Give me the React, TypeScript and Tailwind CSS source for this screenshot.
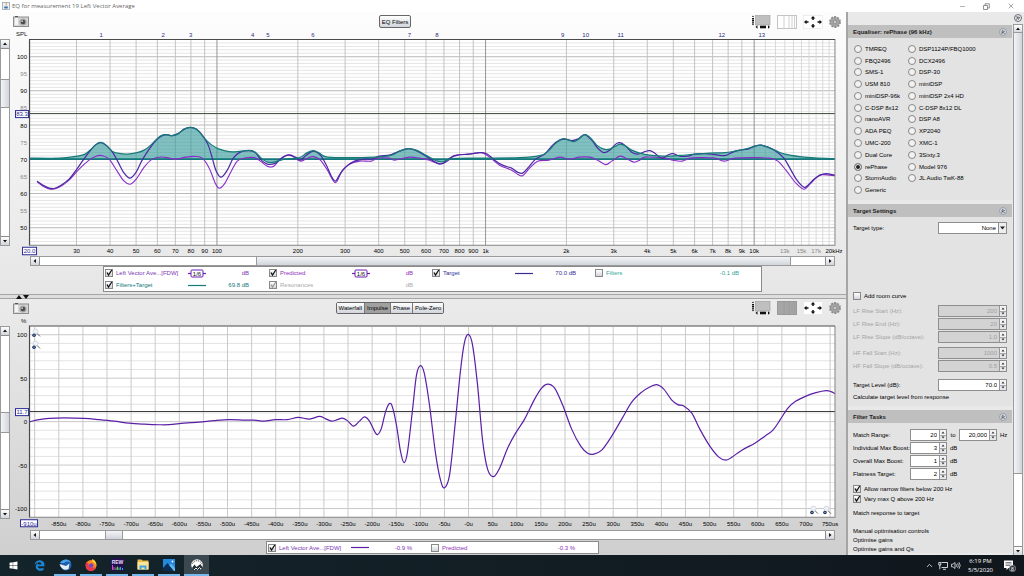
import React from "react";
import { FaWindows, FaEdgeLegacy } from "react-icons/fa";
import { Minus, X, ChevronUp, ChevronsUp, ChevronsRight } from "lucide-react";

type Point = [number, number];

const filtersTarget: Point[] = [
  [30, 158], [60, 158], [78, 156], [86, 154], [92, 149], [98, 143.5], [102, 142.3], [107, 145], [113, 151],
  [120, 153.3], [128, 154], [138, 152.5], [145, 150], [151, 145.5], [157, 139.5], [162, 135.5], [167, 134.5],
  [173, 135.5], [179, 133.5], [185, 129], [191, 127.3], [197, 129], [202, 134], [206, 139], [212, 144.5],
  [220, 149], [230, 151.5], [240, 151.3], [250, 150.3], [256, 152], [262, 158], [268, 162], [275, 162],
  [285, 159], [300, 157.5], [307, 153], [314, 150.5], [320, 153], [326, 156.5], [340, 157.5], [375, 157],
  [392, 155], [400, 151], [409, 148.5], [418, 150.5], [428, 156], [438, 161], [444, 161.5], [452, 158.5],
  [480, 158], [520, 157.5], [540, 155.5], [548, 151.5], [555, 144], [560, 140], [564, 138.5], [569, 140],
  [574, 141.5], [579, 139], [585, 134.5], [591, 138], [597, 145], [604, 149], [610, 149], [616, 146],
  [620, 144], [626, 146], [632, 150], [640, 153], [650, 155], [665, 156], [680, 155.3], [695, 154],
  [710, 153], [725, 152.5], [735, 151], [745, 149], [755, 146], [761, 145], [768, 147], [776, 150.5],
  [785, 154], [800, 156.5], [815, 157.8], [835, 158.5],
];

const predicted: Point[] = [
  [38, 181], [44, 185], [50, 188], [55, 188.3], [62, 185], [70, 179], [77, 170], [84, 160], [90, 152],
  [96, 145], [102, 142.5], [108, 146], [114, 153], [119, 162], [125, 173], [131, 178], [137, 172],
  [143, 160], [150, 149], [157, 140], [162, 136], [167, 134.5], [173, 135.5], [179, 133.5], [185, 129],
  [191, 127.3], [197, 129], [203, 135], [209, 145], [213, 158], [217, 171], [222, 177], [228, 170],
  [234, 158], [241, 152], [250, 150.5], [256, 152.5], [262, 160], [268, 164], [276, 163], [282, 158],
  [289, 155], [296, 157], [301, 160], [307, 155], [314, 151], [321, 155], [327, 165], [332, 176],
  [336, 181], [340, 175], [345, 168], [355, 161], [365, 159], [372, 159], [380, 156], [390, 155],
  [400, 151], [409, 148.5], [418, 151], [428, 157], [438, 163], [444, 163], [450, 158], [458, 155],
  [470, 154], [482, 152.5], [488, 154], [495, 160], [503, 165], [512, 168], [518, 172], [523, 173],
  [529, 167], [536, 159], [545, 154], [553, 145], [560, 140], [566, 139], [572, 140.5], [578, 139],
  [585, 134.5], [592, 140], [598, 148], [604, 152.5], [610, 150], [616, 144], [620, 142.5], [625, 145],
  [632, 152], [638, 154], [645, 151.5], [650, 150.5], [655, 153], [662, 158], [668, 155], [673, 153.5],
  [680, 156], [688, 156], [695, 154], [705, 153.5], [715, 154.5], [725, 155.5], [733, 152], [740, 150],
  [748, 149], [755, 146], [761, 145], [768, 147], [776, 151], [784, 158], [790, 168], [797, 180],
  [804, 187], [808, 185], [814, 179], [820, 175], [826, 173.5], [835, 175],
];

const measured: Point[] = [
  [38, 181.5], [44, 186], [52, 189], [60, 187], [70, 180], [80, 169], [90, 160], [97, 156], [103, 155.5],
  [110, 159], [118, 171], [125, 181], [131, 184], [137, 179], [145, 167], [153, 159], [162, 156.8],
  [170, 158], [177, 159], [187, 157], [196, 156.3], [203, 158], [210, 168], [216, 183], [220, 188],
  [225, 184], [232, 171], [238, 161], [245, 158], [255, 157.5], [261, 161], [268, 166], [274, 166.3],
  [280, 160], [286, 155.5], [292, 155], [297, 159], [302, 161], [308, 158], [314, 156.5], [321, 160],
  [328, 170], [336, 182.5], [342, 172], [350, 164], [360, 161], [372, 161], [378, 158], [390, 158],
  [395, 160], [410, 157], [420, 158], [430, 160], [440, 164], [448, 161], [454, 155.5], [468, 154],
  [482, 152.5], [490, 157], [500, 165], [512, 170], [518, 174], [523, 175.5], [530, 168], [538, 161],
  [549, 160], [560, 157], [570, 159], [580, 157], [590, 157], [598, 160], [606, 164.5], [612, 161],
  [620, 156], [626, 158], [634, 162], [640, 160], [645, 157], [665, 158], [673, 160], [682, 161],
  [690, 158], [700, 157.5], [715, 158], [724, 161], [735, 158], [755, 157.5], [770, 158], [778, 161],
  [786, 170], [796, 183], [804, 189], [810, 184], [816, 178], [822, 174.5], [835, 175.5],
];

const impulse: Point[] = [
  [31, 421.5], [40, 419.5], [50, 418.3], [65, 417.8], [85, 418.3], [100, 419.5], [115, 421], [130, 423],
  [145, 424], [160, 424.6], [170, 424.5], [185, 423], [200, 422], [215, 420.5], [230, 419.5], [245, 420],
  [255, 420], [265, 421], [276, 419.5], [288, 419.5], [299, 417.3], [310, 419], [320, 416.3], [326, 418.5],
  [332, 421], [338, 419.5], [343, 418], [348, 420.5], [354, 426], [360, 421], [365, 416.8], [370, 421],
  [375, 431], [378, 434.5], [382, 428], [386, 412], [390, 403.5], [393, 407], [397, 425], [401, 451],
  [404.5, 462.5], [408, 452], [413, 410], [417, 375], [421, 365.5], [425, 374], [430, 405], [436, 453],
  [441, 480], [445, 487.5], [450, 475], [455, 430], [461, 370], [465, 342], [469, 334.5], [473, 345],
  [478, 385], [483, 440], [488, 469], [494, 476.5], [500, 468], [508, 448], [516, 433], [525, 419],
  [535, 399], [542, 388], [548, 384], [555, 388], [563, 405], [572, 429], [581, 446], [588, 453],
  [594, 454], [602, 450], [612, 436], [622, 419], [632, 402], [642, 392], [650, 387], [657, 384.5],
  [664, 389], [672, 400], [678, 404.5], [684, 406], [692, 413], [700, 429], [710, 446], [719, 457],
  [726, 460], [732, 457], [742, 450], [755, 443], [765, 436], [773, 430], [780, 420], [788, 408],
  [796, 401], [806, 396], [816, 392.5], [826, 390.5], [831, 391.5], [835, 393.5],
];

// Catmull-Rom through the points
const smooth = (pts: Point[]) => {
  let d = `M${pts[0][0]} ${pts[0][1]}`;
  for (let i = 0; i < pts.length - 1; i++) {
    const a = pts[i - 1] || pts[i];
    const b = pts[i];
    const c = pts[i + 1];
    const e = pts[i + 2] || c;
    d += `C${b[0] + (c[0] - a[0]) / 6} ${b[1] + (c[1] - a[1]) / 6} ${c[0] - (e[0] - b[0]) / 6} ${c[1] - (e[1] - b[1]) / 6} ${c[0]} ${c[1]}`;
  }
  return d;
};

const freqX = (f: number) => 217.7 + 268.3 * (Math.log10(f) - 2);
const splY = (v: number) => 56.6 + (100 - v) * 3.42;
const timeX = (t: number) => 469 + t * 0.4815;
const pctY = (v: number) => 421.5 - v * 0.868;

const freqLines = [
  30, 40, 50, 60, 70, 80, 90, 100, 200, 300, 400, 500, 600, 700, 800, 900, 1000, 2000, 3000, 4000, 5000,
  6000, 7000, 8000, 9000, 10000, 11000, 12000, 13000, 14000, 15000, 16000, 17000, 18000, 19000,
];

const filterMarks = [
  [1, 102], [2, 164], [3, 191.5], [4, 253.5], [5, 268.5], [6, 313.5], [7, 410], [8, 437.5], [9, 563],
  [10, 586], [11, 621], [12, 722], [13, 762],
];

const leftDevices = [
  "TMREQ", "FBQ2496", "SMS-1", "USM 810", "miniDSP-96k", "C-DSP 8x12", "nanoAVR", "ADA PEQ", "UMC-200",
  "Dual Core", "rePhase", "StormAudio", "Generic",
];
const rightDevices = [
  "DSP1124P/FBQ1000", "DCX2496", "DSP-30", "miniDSP", "miniDSP 2x4 HD", "C-DSP 8x12 DL", "DSP A8",
  "XP2040", "XMC-1", "3Sixty.3", "Model 976", "JL Audio TwK-88",
];

const freqLabel = (f: number) => {
  if (f < 1000) return String(f);
  return `${f / 1000}k`;
};

function SplChart() {
  const labels = freqLines.filter((f) => f <= 10000 || [13000, 15000, 17000].includes(f));
  const minor = Array.from({ length: 60 }, (_, i) => 46 + i).filter((v) => v < 105);
  return (
    <svg viewBox="10 29 836 228" className="block min-w-0 flex-1 text-[6px]" role="img" aria-label="SPL">
      <rect x="30" y="39" width="805" height="206" fill="#fff" />
      {minor.map((v) => (
        <path key={v} d={`M31 ${splY(v)}H835`} stroke={v % 10 === 0 ? "#b9b9b9" : "#dedede"} strokeWidth={v % 10 === 0 ? 1 : 0.8} />
      ))}
      {freqLines.map((f) => (
        <path
          key={f}
          d={`M${freqX(f)} 40V245`}
          stroke={[100, 1000, 10000].includes(f) ? "#8a8a8a" : f > 10000 ? "#d6d6d6" : "#bdbdbd"}
          strokeWidth="0.9"
        />
      ))}
      <path d="M31 113.5H835" stroke="#4c554c" strokeWidth="1" />
      <path d={`${smooth(filtersTarget)}V159H30Z`} fill="#2b9696" fillOpacity="0.6" />
      <g fill="none" strokeLinejoin="round">
        <path d="M30 159H835" stroke="#14787c" strokeWidth="1.6" />
        <path d={smooth(measured)} stroke="#8a2bc8" strokeWidth="1.1" />
        <path d={smooth(predicted)} stroke="#4a28a4" strokeWidth="1.2" />
        <path d={smooth(filtersTarget)} stroke="#157a78" strokeWidth="1.2" />
      </g>
      <path d="M835 39V245H30" fill="none" stroke="#858585" />
      <path d="M30.5 245V39.5H835" fill="none" stroke="#4a4a4a" strokeWidth="1.2" />
      <g fill="#2c2c86" textAnchor="middle">
        {filterMarks.map(([n, x]) => (
          <text key={n} x={x} y="37">{n}</text>
        ))}
      </g>
      <text x="17" y="36" fill="#111">SPL</text>
      <g textAnchor="end">
        {[100, 95, 90, 85, 80, 75, 70, 65, 60, 55, 50].map((v) => (
          <text key={v} x="28" y={splY(v) + 2.5} fill={v % 10 ? "#888" : "#000"}>{v}</text>
        ))}
      </g>
      <g textAnchor="middle">
        {labels.map((f) => (
          <text key={f} x={freqX(f)} y="253" fill={f > 10000 ? "#888" : "#000"}>{freqLabel(f)}</text>
        ))}
        <text x="834" y="253" fill="#000">20kHz</text>
      </g>
      <rect x="16.5" y="110.5" width="13" height="7" fill="#fff" stroke="#2c2c96" />
      <text x="23" y="116" textAnchor="middle" fill="#2c2c96">83.3</text>
      <rect x="23.5" y="247" width="14" height="7.5" fill="#fff" stroke="#2c2c96" />
      <text x="30.5" y="253" textAnchor="middle" fill="#2c2c96">20.0</text>
    </svg>
  );
}

function Magnifier({ x, y }: { x: number; y: number }) {
  return (
    <g transform={`translate(${x} ${y})`}>
      <circle cx="3.5" cy="2.5" r="2.6" fill="#eef1f6" stroke="#c3c8d2" strokeWidth="0.6" />
      <path d="M5.2 4.6L8 7.4" stroke="#555" strokeWidth="0.9" />
      <circle cx="2" cy="6.2" r="1.8" fill="#1d3467" />
      <path d="M1.2 6.2H2.8" stroke="#fff" strokeWidth="0.5" />
    </g>
  );
}

function ImpulseChart() {
  const times = Array.from({ length: 34 }, (_, i) => -900 + i * 50);
  const pcts = Array.from({ length: 21 }, (_, i) => -100 + i * 10);
  return (
    <svg viewBox="10 317 836 212" className="block min-w-0 flex-1 text-[6px]" role="img" aria-label="Impulse">
      <rect x="30" y="326" width="805" height="191" fill="#fff" />
      {pcts.map((v) => (
        <path key={v} d={`M31 ${pctY(v)}H835`} stroke={v % 50 === 0 ? "#bcbcbc" : "#dcdcdc"} strokeWidth="0.8" />
      ))}
      {times.map((t) => (
        <path key={t} d={`M${timeX(t)} 327V517`} stroke="#cacaca" strokeWidth="1" />
      ))}
      <path d="M31 411.5H835" stroke="#3c3c3c" />
      <path d={smooth(impulse)} fill="none" stroke="#5a1fa6" strokeWidth="1.2" />
      <path d="M835 326V517H30" fill="none" stroke="#858585" />
      <path d="M30.5 517V326H835" fill="none" stroke="#4a4a4a" strokeWidth="1.2" />
      <Magnifier x={33} y={329} />
      <Magnifier x={33} y={341} />
      <Magnifier x={810} y={506} />
      <Magnifier x={823} y={506} />
      <text x="22" y="323" fill="#111">%</text>
      <g textAnchor="end" fill="#000">
        {[100, 50, 0, -50, -100].map((v) => (
          <text key={v} x="28" y={pctY(v) + 2.5}>{v}</text>
        ))}
      </g>
      <g textAnchor="middle" fill="#000">
        {times.slice(1).map((t) => (
          <text key={t} x={timeX(t)} y="525.5">{t === 750 ? "750us" : t === 0 ? "-0u" : `${t}u`}</text>
        ))}
      </g>
      <rect x="16.5" y="408.5" width="13" height="7" fill="#fff" stroke="#2c2c96" />
      <text x="23" y="414" textAnchor="middle" fill="#2c2c96">11.7</text>
      <rect x="21.5" y="519.5" width="17" height="7" fill="#fff" stroke="#2c2c96" />
      <text x="30" y="525.3" textAnchor="middle" fill="#2c2c96">-910u</text>
    </svg>
  );
}

const arrows = {
  up: "M2 5L4 2.5L6 5Z",
  down: "M2 3L4 5.5L6 3Z",
  left: "M5 2L2.5 4L5 6Z",
  right: "M3 2L5.5 4L3 6Z",
};

function ScrollButton({ dir }: { dir: "up" | "down" | "left" | "right" }) {
  return (
    <button aria-label={`Scroll ${dir}`} className="size-2 shrink-0 bg-linear-to-b from-white to-gray-300 outline outline-[#8d8d8d]">
      <svg viewBox="0 0 8 8" className="size-full">
        <path d={arrows[dir]} fill="#111" />
      </svg>
    </button>
  );
}

function Camera() {
  return (
    <button aria-label="Capture image" className="h-[11px] w-4 shrink-0">
      <svg viewBox="0 0 16 11" className="size-full">
        <rect x="0.5" y="1" width="15" height="9.5" fill="#d6d6d6" stroke="#8c8c8c" />
        <rect x="2" y="2" width="3" height="7" fill="#f4f4f4" />
        <path d="M2 0.5H5" stroke="#555" />
        <circle cx="10" cy="6" r="3.6" fill="#a8a8a8" />
        <circle cx="10" cy="6" r="2.3" fill="#4a4a4a" />
        <circle cx="9.2" cy="5.2" r="0.9" fill="#ccc" />
      </svg>
    </button>
  );
}

function ToolIcons({ filled }: { filled?: boolean }) {
  return (
    <div className="flex items-center gap-[6px]">
      <button aria-label="Scrollbars">
        <svg viewBox="0 0 20 14" className="h-[14px] w-5">
          <rect x="4.5" y="0.5" width="14.5" height="9.5" fill="#bfbfbf" stroke="#999" strokeWidth="0.6" />
          <path d="M1 2L2 0.5L3 2ZM1 9L2 10.5L3 9Z" fill="#111" />
          <path d="M2 3V8.5" stroke="#111" strokeWidth="2" strokeDasharray="1.4 0.7" />
          <path d="M4.5 12L6.5 10.3V13.7ZM19 12L17 10.3V13.7Z" fill="#111" />
          <path d="M9 12H15" stroke="#111" strokeWidth="2.6" />
        </svg>
      </button>
      <button aria-label="Graph grid">
        <svg viewBox="0 0 20 14" className="h-[14px] w-5">
          <rect x="0.5" y="0.5" width="19" height="13" fill={filled ? "#a6a6a6" : "#fff"} stroke={filled ? "#999" : "#c4c4c4"} />
          <path d="M7 1V13M12 1V13M15 1V13M17.5 1V13" stroke={filled ? "#999" : "#c4c4c4"} strokeWidth="0.8" />
        </svg>
      </button>
      <button aria-label="Graph limits">
        <svg viewBox="0 0 20 14" className="h-[14px] w-5">
          <rect x="0.5" y="0.5" width="19" height="13" fill="#fff" stroke="#ddd" strokeWidth="0.5" />
          <path d="M1 7L3.5 4.7V9.3ZM19 7L16.5 4.7V9.3ZM10 1L12.3 3.5H7.7ZM10 13L12.3 10.5H7.7Z" fill="#111" />
          <path d="M3 7H5.5M17 7H14.5M10 3V5M10 11V9" stroke="#111" strokeWidth="1.5" />
        </svg>
      </button>
      <button aria-label="Graph settings">
        <svg viewBox="0 0 12 12" className="size-3">
          <circle cx="6" cy="6" r="5" fill="none" stroke="#8b8b8b" strokeWidth="1.8" strokeDasharray="2 1.14" />
          <circle cx="6" cy="6" r="4.6" fill="#a3a3a3" stroke="#858585" strokeWidth="0.5" />
          <circle cx="6" cy="6" r="1.7" fill="#ccc" stroke="#808080" strokeWidth="0.6" />
        </svg>
      </button>
    </div>
  );
}

function Check({ checked, disabled }: { checked?: boolean; disabled?: boolean }) {
  return (
    <span className="grid size-2 shrink-0">
      <input
        type="checkbox"
        defaultChecked={checked}
        disabled={disabled}
        className="col-start-1 row-start-1 size-2 appearance-none border border-[#888] bg-linear-to-b from-white to-gray-300"
      />
      {checked && (
        <svg viewBox="0 0 8 8" className="pointer-events-none col-start-1 row-start-1 size-2">
          <path d="M2 3.5L3.5 6L6.8 1" fill="none" stroke={disabled ? "#999" : "#111"} strokeWidth="1.3" />
        </svg>
      )}
    </span>
  );
}

function Trace({ color, smoothing }: { color: string; smoothing?: boolean }) {
  return (
    <svg viewBox="0 0 20 9" className="h-[9px] w-5 shrink-0">
      <path d="M1 4.5H19" stroke={color} strokeWidth="1.2" />
      {smoothing && (
        <>
          <rect x="4" y="1" width="12" height="7" rx="1" fill="#fff" stroke={color} />
          <text x="10" y="6.5" textAnchor="middle" className="text-[6px]" fill="#111">1/6</text>
        </>
      )}
    </svg>
  );
}

interface LegendItemProps {
  label: string;
  value: string;
  color: string;
  text: string;
  checked?: boolean;
  disabled?: boolean;
  line?: boolean;
  smoothing?: boolean;
}

function LegendItem({ label, value, color, text, checked, disabled, line, smoothing }: LegendItemProps) {
  return (
    <div className={`flex h-3 items-center ${text}`}>
      <label className="flex w-[82px] items-center gap-[3px] whitespace-nowrap">
        <Check checked={checked} disabled={disabled} />
        {label}
      </label>
      {line ? <Trace color={color} smoothing={smoothing} /> : <span className="w-5" />}
      <span className="w-[42px] text-right">{value}</span>
    </div>
  );
}

function SpinButtons({ disabled }: { disabled?: boolean }) {
  return (
    <span className="flex w-[7px] flex-col border-l border-[#999]">
      <button disabled={disabled} aria-label="Increase" className="flex flex-1 items-center justify-center border-b border-[#aaa] bg-gray-100">
        <svg viewBox="0 0 4 3" className="h-[3px] w-1"><path d="M0.5 2.5L2 0.5L3.5 2.5Z" fill="#333" /></svg>
      </button>
      <button disabled={disabled} aria-label="Decrease" className="flex flex-1 items-center justify-center bg-gray-200">
        <svg viewBox="0 0 4 3" className="h-[3px] w-1"><path d="M0.5 0.5L2 2.5L3.5 0.5Z" fill="#333" /></svg>
      </button>
    </span>
  );
}

function Spinner({ id, value, width, disabled }: { id: string; value: string; width: string; disabled?: boolean }) {
  return (
    <span className={`flex h-3 border border-[#8e8e8e] ${width} ${disabled ? "bg-[#d3d3d3] text-[#a0a0a0]" : "bg-white text-black"}`}>
      <input id={id} defaultValue={value} disabled={disabled} className="min-w-0 flex-1 pr-[2px] text-right" />
      <SpinButtons disabled={disabled} />
    </span>
  );
}

function PanelHeader({ title }: { title: string }) {
  return (
    <div className="flex h-[13px] items-center justify-between bg-[#bfbfbf] px-[5px] font-bold text-[#1c1c1c]">
      <h2>{title}</h2>
      <button aria-label={`Collapse ${title}`} className="flex size-2 items-center justify-center rounded-full border border-gray-400 bg-gray-300">
        <ChevronsUp size={6} strokeWidth={3} />
      </button>
    </div>
  );
}

function DeviceColumn({ names }: { names: string[] }) {
  return (
    <div className="grid h-[153px] grid-rows-13">
      {names.map((name) => (
        <label key={name} className="flex items-center gap-[3px] whitespace-nowrap">
          <input
            type="radio"
            name="equaliser"
            defaultChecked={name === "rePhase"}
            className="size-2 shrink-0 appearance-none rounded-full border border-[#888] bg-[#f2f2f2] checked:bg-[#222] checked:shadow-[inset_0_0_0_1px_#f2f2f2]"
          />
          {name}
        </label>
      ))}
    </div>
  );
}

function Field({ id, label, value, disabled }: { id: string; label: string; value: string; disabled?: boolean }) {
  return (
    <div className={`flex items-center justify-between ${disabled ? "text-[#a3a3a3]" : ""}`}>
      <label htmlFor={id}>{label}</label>
      <Spinner id={id} value={value} width="w-[69px]" disabled={disabled} />
    </div>
  );
}

function Boost({ id, label, value, children }: { id: string; label: string; value: string; children: React.ReactNode }) {
  return (
    <div className="flex items-center">
      <label htmlFor={id} className="w-[57px] whitespace-nowrap">{label}</label>
      <Spinner id={id} value={value} width="w-[37px]" />
      {children}
    </div>
  );
}

function Sidebar() {
  return (
    <aside className="flex w-[178px] shrink-0 border-l-2 border-[#a5a5a5] bg-[#e9e9e9]">
      <div className="min-w-0 flex-1 overflow-hidden pt-[13px]">
        <section className="bg-[#e3e3e3] pb-1">
          <PanelHeader title="Equaliser: rePhase (96 kHz)" />
          <div className="flex gap-[6px] pt-[5px] pl-[6px]">
            <div className="w-12"><DeviceColumn names={leftDevices} /></div>
            <DeviceColumn names={rightDevices} />
          </div>
        </section>

        <section className="mt-1 bg-[#e3e3e3] pb-[5px]">
          <PanelHeader title="Target Settings" />
          <div className="px-[5px]">
            <div className="flex items-center justify-between pt-[5px]">
              <label htmlFor="type">Target type:</label>
              <span className="grid w-[69px]">
                <select id="type" className="col-start-1 row-start-1 h-3 appearance-none border border-[#8e8e8e] bg-white pr-[10px] text-right">
                  <option>None</option>
                </select>
                <svg viewBox="0 0 9 12" className="pointer-events-none col-start-1 row-start-1 h-3 w-[9px] justify-self-end">
                  <rect x="0.5" y="0.5" width="8" height="11" fill="#eee" stroke="#8e8e8e" />
                  <path d="M2 4.5H7L4.5 7.5Z" fill="#222" />
                </svg>
              </span>
            </div>
            <label className="mt-[58px] flex items-center gap-[3px]">
              <Check />
              Add room curve
            </label>
            <div className="mt-[5px] flex flex-col gap-[1px]">
              <Field id="lfs" label="LF Rise Start (Hz):" value="200" disabled />
              <Field id="lfe" label="LF Rise End (Hz):" value="20" disabled />
              <Field id="lfo" label="LF Rise Slope (dB/octave):" value="1.0" disabled />
            </div>
            <div className="mt-1 flex flex-col gap-[1px]">
              <Field id="hfs" label="HF Fall Start (Hz):" value="1000" disabled />
              <Field id="hfo" label="HF Fall Slope (dB/octave):" value="0.5" disabled />
            </div>
            <div className="mt-[7px]">
              <Field id="level" label="Target Level (dB):" value="70.0" />
            </div>
            <button className="mt-[2px] block">Calculate target level from response</button>
          </div>
        </section>

        <section className="mt-1 bg-[#e3e3e3]">
          <PanelHeader title="Filter Tasks" />
          <div className="pt-[6px] pl-[5px]">
            <div className="flex flex-col gap-[1px]">
              <Boost id="range" label="Match Range:" value="20">
                <label htmlFor="rangeEnd" className="w-3 text-center">to</label>
                <Spinner id="rangeEnd" value="20,000" width="w-[38px]" />
                <span className="pl-[3px]">Hz</span>
              </Boost>
              <Boost id="individual" label="Individual Max Boost:" value="3"><span className="pl-[3px]">dB</span></Boost>
              <Boost id="overall" label="Overall Max Boost:" value="1"><span className="pl-[3px]">dB</span></Boost>
              <Boost id="flatness" label="Flatness Target:" value="2"><span className="pl-[3px]">dB</span></Boost>
            </div>
            <label className="mt-[5px] flex items-center gap-[3px]">
              <Check checked />
              Allow narrow filters below 200 Hz
            </label>
            <label className="mt-[2px] flex items-center gap-[3px]">
              <Check checked />
              Vary max Q above 200 Hz
            </label>
            <button className="mt-[6px] block">Match response to target</button>
            <button className="mt-[10px] block">Manual optimisation controls</button>
            <button className="mt-[1px] block">Optimise gains</button>
            <button className="mt-[1px] block">Optimise gains and Qs</button>
          </div>
        </section>
      </div>

      <div className="flex w-3 flex-col items-center">
        <button aria-label="Hide panel" className="mt-[2px] mb-[3px] flex size-2 items-center justify-center rounded-full border border-gray-500">
          <ChevronsRight size={6} strokeWidth={3} />
        </button>
        <div className="flex w-2 flex-1 flex-col bg-white outline outline-[#9a9a9a]">
          <ScrollButton dir="up" />
          <span className={`flex-[440] ${THUMB_V}`} />
          <span className="flex-[74]" />
          <ScrollButton dir="down" />
        </div>
      </div>
    </aside>
  );
}

const TAB = "border-r border-[#777] bg-linear-to-b from-white to-gray-300 px-[2px] last:border-r-0";
const THUMB_V = "w-full bg-linear-to-r from-gray-100 to-gray-300 outline outline-[#9a9a9a]";
const THUMB_H = "h-full bg-linear-to-b from-gray-100 to-gray-300 outline outline-[#9a9a9a]";

function Taskbar() {
  const slot = "flex h-full w-[22px] items-center justify-center";
  const open = `${slot} border-b-2 border-[#76b9ed]`;
  return (
    <footer className="flex h-[21px] shrink-0 items-center bg-linear-to-r from-[#14242b] to-[#10171d] text-white">
      <nav className="flex h-full items-center gap-1 pl-[2px]">
        <button aria-label="Start" className={slot}><FaWindows size={9} /></button>
        <button aria-label="Edge" className={slot}><FaEdgeLegacy size={11} color="#1e88d8" /></button>
        <button aria-label="Thunderbird" className={open}>
          <svg viewBox="0 0 13 12" className="h-3 w-[13px]">
            <circle cx="7" cy="6" r="5.5" fill="#1c5fb0" />
            <path d="M1 4C3 0 10 -1 12 4C10 2 7 2 5 4Z" fill="#4aa3e8" />
            <path d="M0.5 5L7 7L10.5 4.5L9.5 10C6 12 2 10 0.5 5Z" fill="#e8edf3" />
          </svg>
        </button>
        <button aria-label="Firefox" className={open}>
          <svg viewBox="0 0 12 12" className="size-3">
            <circle cx="6" cy="6.5" r="5.4" fill="#ff8a1e" />
            <path d="M6 12C2 12 0 8 1 3L3.5 4.5C3 8 6 10 10.5 8C10 10.5 8 12 6 12Z" fill="#f0334a" />
            <path d="M7 0C10 1 12 4 11.3 7C10.5 4 9 3 7.5 3Z" fill="#ffd43a" />
            <circle cx="6.2" cy="6.5" r="2.3" fill="#7542c8" />
          </svg>
        </button>
        <button aria-label="REW" className={open}>
          <svg viewBox="0 0 13 13" className="size-[13px]">
            <rect width="13" height="13" fill="#24104e" />
            <text x="6.5" y="5.5" textAnchor="middle" className="text-[5px] font-bold" fill="#e8dcff">REW</text>
            <path d="M1.5 12V7M3 12V9" stroke="#d94bd0" />
            <path d="M5 12V9.5M6.5 12V8.5M8 12V9.5" stroke="#4fd24f" />
            <path d="M9.5 12V9M11.5 12V10" stroke="#3aa0e8" />
          </svg>
        </button>
        <button aria-label="File Explorer" className={open}>
          <svg viewBox="0 0 12 11" className="h-[11px] w-3">
            <path d="M0.5 0.5H4.5L5.5 1.5H11.5V10.5H0.5Z" fill="#e8bd4c" />
            <rect x="0.5" y="3" width="11" height="7.5" fill="#fbe39a" />
            <path d="M2.5 10.5V6.5H9.5V10.5H7.5V8.5H4.5V10.5Z" fill="#3fa3e0" />
          </svg>
        </button>
        <button aria-label="Photos" className={open}>
          <svg viewBox="0 0 12 12" className="size-3">
            <rect width="12" height="12" fill="#2389dc" />
            <path d="M0 9L4.5 4L11 12H0Z" fill="#0a2c55" />
            <path d="M6 6L8.5 5L12 9V12H11Z" fill="#5fb4f2" />
            <circle cx="9.5" cy="2.5" r="0.9" fill="#fff" />
          </svg>
        </button>
        <button aria-label="EQ window" className="flex h-full w-[25px] items-center justify-center border-b-2 border-[#76b9ed] bg-[#3c484f]">
          <svg viewBox="0 0 14 12" className="h-3 w-[14px]">
            <circle cx="7" cy="6" r="5.8" fill="#fff" />
            <path d="M2.5 4.5A5 5 0 0 1 11.5 4.5" fill="none" stroke="#222" strokeWidth="0.9" strokeDasharray="1.2 0.9" />
            <path d="M2 9L4.5 5.5L6.5 8L10.5 5L12.5 8.5L9 11.8H4Z" fill="#26323a" />
            <path d="M4 11L6 9L7.5 10.5L9.5 8.5L11 10" fill="none" stroke="#fff" strokeWidth="0.9" />
          </svg>
        </button>
      </nav>
      <div className="ml-auto flex items-center">
        <button aria-label="Hidden icons"><ChevronUp size={9} /></button>
        <svg viewBox="0 0 10 9" className="ml-1 h-[9px] w-[10px]" fill="none" stroke="#fff" strokeWidth="0.8">
          <path d="M3.5 1.5H9.5V6.5H3.5M5 8.3H8M0.8 1.5V4H2.8V1.5ZM1.8 4V8.3" />
        </svg>
        <svg viewBox="0 0 10 9" className="ml-[3px] h-[9px] w-[10px]" fill="none" stroke="#fff" strokeWidth="0.7">
          <path d="M0.5 3.2H2L4 1.5V7.5L2 5.8H0.5ZM5.2 3.2Q6.2 4.5 5.2 5.8M6.6 2.2Q8.2 4.5 6.6 6.8M8 1.2Q10.4 4.5 8 7.8" />
        </svg>
        <div className="ml-[7px] text-center font-['Open_Sans',sans-serif] text-[6px] leading-[9px]">
          <p>6:19 PM</p>
          <p>5/5/2020</p>
        </div>
        <button aria-label="Notifications" className="mr-2 ml-[10px]">
          <svg viewBox="0 0 13 13" className="size-[13px]">
            <path d="M1 1.5H10V9H5.5L3.5 11V9H1Z" fill="#fff" />
            <path d="M2.5 3.5H8.5M2.5 5H8.5M2.5 6.5H7" stroke="#26323a" strokeWidth="0.6" />
            <circle cx="9.5" cy="9.5" r="3.2" fill="#26323a" stroke="#bbb" strokeWidth="0.6" />
            <text x="9.5" y="11.5" textAnchor="middle" className="text-[5px]" fill="#fff">8</text>
          </svg>
        </button>
      </div>
    </footer>
  );
}

export default function App() {
  return (
    <div className="flex h-screen flex-col overflow-hidden bg-white font-['Liberation_Sans',Arial,sans-serif] text-[6px] leading-2 text-black">
      <header className="flex h-3 shrink-0 items-center pl-[2px]">
        <svg viewBox="0 0 8 8" className="size-2">
          <rect x="0.5" y="0.5" width="7" height="7" fill="#eef2f6" stroke="#8a98a8" strokeWidth="0.7" />
          <path d="M4 1Q5 2.2 4 3.5" fill="none" stroke="#e07a20" strokeWidth="0.8" />
          <path d="M2 4.5H6L5.5 6.5H2.5Z" fill="#3d6f9e" />
        </svg>
        <h1 className="ml-[2px] font-['Open_Sans',sans-serif] text-[6px] text-[#666]">EQ for measurement 19 Left Vector Average</h1>
        <div className="ml-auto flex items-center gap-[17px] pr-[9px] text-[#777]">
          <button aria-label="Minimise"><Minus size={7} /></button>
          <button aria-label="Restore">
            <svg viewBox="0 0 7 7" className="size-[7px]" fill="none" stroke="#777" strokeWidth="0.8">
              <path d="M0.5 2.5H4.5V6.5H0.5ZM2 2.5V0.8H6.3V5H4.5" />
            </svg>
          </button>
          <button aria-label="Close"><X size={8} /></button>
        </div>
      </header>

      <div className="flex min-h-0 flex-1">
        <main className="flex min-w-0 flex-1 flex-col">
          <section className="bg-linear-to-b from-[#fdfdfd] to-[#e6e6e6] pb-[2px]">
            <div className="flex h-[17px] items-center justify-between pt-[2px] pr-[5px] pl-[13px]">
              <Camera />
              <button className="ml-[10px] h-[13px] rounded-[2px] border border-[#666] bg-linear-to-b from-white to-gray-300 px-[2px]">EQ Filters</button>
              <ToolIcons />
            </div>
            <div className="flex">
              <div className="mt-[11px] mb-[12px] ml-[1px] flex w-2 flex-col bg-white outline outline-[#9a9a9a]">
                <ScrollButton dir="up" />
                <span className="flex-[32]" />
                <span className={`flex-[27] ${THUMB_V}`} />
                <span className="flex-[130]" />
                <ScrollButton dir="down" />
              </div>
              <SplChart />
            </div>
            <div className="mr-[12px] ml-[31px] flex h-2 bg-white outline outline-[#9a9a9a]">
              <ScrollButton dir="left" />
              <span className="flex-[218]" />
              <span className={`flex-[533] ${THUMB_H}`} />
              <span className="flex-[36]" />
              <ScrollButton dir="right" />
            </div>
            <div className="mt-[1px] ml-[103px] grid w-[659px] grid-cols-[164px_163px_163px_auto] border border-[#8a8a8a] bg-white pl-[1px]">
              <LegendItem label="Left Vector Ave...[FDW]" value="dB" color="#6a1fb0" text="text-[#7a35b5]" checked line smoothing />
              <LegendItem label="Predicted" value="dB" color="#6a1fb0" text="text-[#9030b8]" checked line smoothing />
              <LegendItem label="Target" value="70.0 dB" color="#3a2a98" text="text-[#2f2f98]" checked line />
              <LegendItem label="Filters" value="-0.1 dB" color="#30a89c" text="text-[#30a89c]" />
              <LegendItem label="Filters+Target" value="69.8 dB" color="#14787c" text="text-[#14787c]" checked line />
              <LegendItem label="Resonances" value="dB" color="#aaa" text="text-[#aaa]" checked disabled />
            </div>
          </section>

          <div className="flex h-[5px] items-center border-t border-b border-[#a5a5a5] bg-[#dedede] pl-4">
            <svg viewBox="0 0 13 4" className="h-1 w-[13px]">
              <path d="M0 4L3 0L6 4ZM7 0H13L10 4Z" fill="#111" />
            </svg>
          </div>

          <section className="flex-1 bg-linear-to-b from-[#ebebeb] to-[#cfcfcf]">
            <div className="flex h-[18px] items-center justify-between pr-[5px] pl-[13px]">
              <Camera />
              <div className="flex h-3 rounded-[2px] border border-[#666]">
                <button className={TAB}>Waterfall</button>
                <button className="border-r border-[#777] bg-[#a0a0a0] px-[2px]">Impulse</button>
                <button className={TAB}>Phase</button>
                <button className={TAB}>Pole-Zero</button>
              </div>
              <ToolIcons filled />
            </div>
            <div className="flex">
              <div className="mt-[10px] mb-[12px] ml-[1px] flex w-2 flex-col bg-white outline outline-[#9a9a9a]">
                <ScrollButton dir="up" />
                <span className="flex-[78]" />
                <span className={`flex-[19] ${THUMB_V}`} />
                <span className="flex-[78]" />
                <ScrollButton dir="down" />
              </div>
              <ImpulseChart />
            </div>
            <div className="mt-[1px] mr-[12px] ml-[31px] flex h-2 bg-white outline outline-[#9a9a9a]">
              <ScrollButton dir="left" />
              <span className="flex-[67]" />
              <span className={`flex-[16] ${THUMB_H}`} />
              <span className="flex-[705]" />
              <ScrollButton dir="right" />
            </div>
            <div className="mt-[2px] ml-[266px] grid h-[13px] w-[333px] grid-cols-[163px_auto] items-center border border-[#8a8a8a] bg-white pl-[1px]">
              <LegendItem label="Left Vector Ave...[FDW]" value="-0.9 %" color="#5a1fa6" text="text-[#7a35b5]" checked line />
              <LegendItem label="Predicted" value="-0.3 %" color="#9030b8" text="text-[#9030b8]" />
            </div>
          </section>
        </main>
        <Sidebar />
      </div>

      <Taskbar />
    </div>
  );
}
